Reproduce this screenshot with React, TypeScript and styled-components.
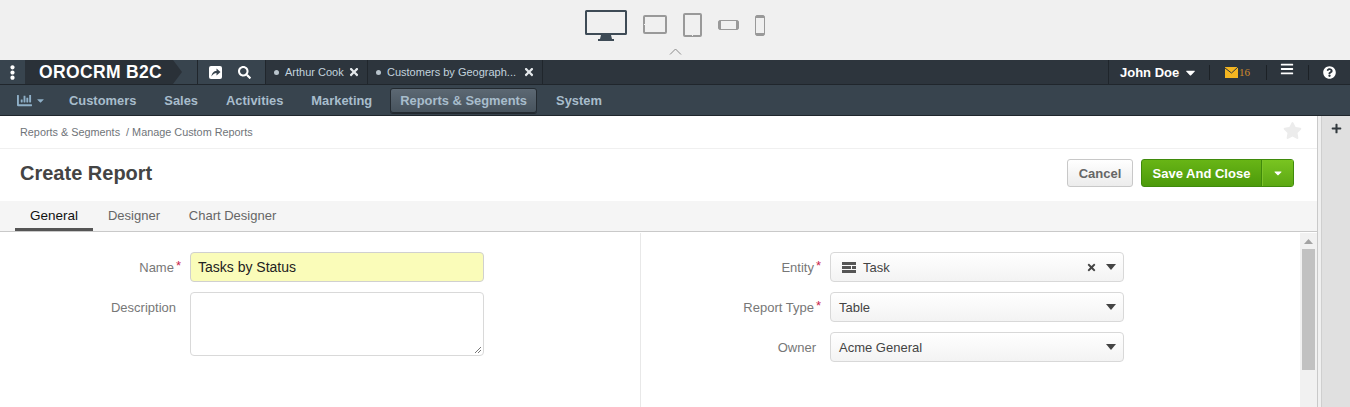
import React from 'react'
import styled, { createGlobalStyle } from 'styled-components'
import { FaBars, FaCaretDown, FaChartBar, FaPlus, FaQuestionCircle, FaSearch, FaStar, FaTimes, FaEllipsisV } from 'react-icons/fa'

const GlobalStyle = createGlobalStyle`
html, body {
  margin: 0;
  padding: 0;
  height: 407px;
  overflow: hidden;
  background: #fff;
  font-family: "Liberation Sans", Arial, sans-serif;
}
* { box-sizing: border-box; }
`

const Page = styled.div`
width: 1350px;
height: 407px;
display: flex;
flex-direction: column;
overflow: hidden;
`

/* device switcher strip */
const DeviceBar = styled.div`
height: 60px;
flex: none;
background: #f0f0f0;
display: flex;
flex-direction: column;
align-items: center;
`
const DeviceRow = styled.div`
height: 47px;
display: flex;
align-items: flex-start;
gap: 16px;
padding-top: 10px;
`
const DeviceSlot = styled.div<{ $top: number }>`
margin-top: ${(p) => p.$top}px;
display: flex;
`
const Chevron = styled.svg`
display: block;
`

/* top dark bar */
const TopBar = styled.div`
height: 25px;
flex: none;
background: #2d353d;
border-bottom: 1px solid #20262c;
display: flex;
align-items: stretch;
color: #fff;
`
const DotsButton = styled.div`
width: 25px;
background: #38444e;
display: flex;
align-items: center;
justify-content: center;
`
const Logo = styled.div`
width: 148px;
background: #2a3138;
position: relative;
font-size: 17.5px;
font-weight: bold;
line-height: 24px;
padding-left: 14px;
letter-spacing: 0.35px;
&::after {
  content: "";
  position: absolute;
  left: 148px;
  top: 0;
  border-left: 9px solid #2a3138;
  border-top: 12px solid transparent;
  border-bottom: 12px solid transparent;
}
`
const ToolGroup = styled.div`
width: 93px;
padding-left: 24px;
background: #38444e;
display: flex;
align-items: stretch;
border-right: 1px solid #20262c;
`
const ToolInner = styled.div`
flex: 1;
border-left: 1px solid #20262c;
padding-left: 11px;
display: flex;
align-items: center;
gap: 16px;
font-size: 13px;
`
const Pin = styled.div<{ $width: number }>`
width: ${(p) => p.$width}px;
flex: none;
display: flex;
align-items: center;
padding-left: 8px;
border-right: 1px solid #20262c;
font-size: 11px;
color: #c3d3dd;
`
const PinDot = styled.span`
width: 5px;
height: 5px;
border-radius: 50%;
background: #b9c4cc;
margin-right: 6px;
flex: none;
`
const PinClose = styled.span`
margin-left: auto;
margin-right: 7px;
display: flex;
color: #e4e8eb;
font-size: 12px;
`
const TopRight = styled.div`
margin-left: auto;
display: flex;
align-items: stretch;
`
const UserBox = styled.div`
width: 101px;
border-left: 1px solid #1f252b;
display: flex;
align-items: center;
padding-left: 11px;
font-size: 13px;
font-weight: bold;
gap: 4px;
`
const TopCell = styled.div<{ $width: number; $raised?: boolean }>`
width: ${(p) => p.$width}px;
display: flex;
align-items: center;
justify-content: center;
position: relative;
padding-bottom: ${(p) => (p.$raised ? '7px' : '0')};
&::before {
  content: "";
  position: absolute;
  left: 0;
  top: 5px;
  bottom: 4px;
  width: 1px;
  background: #1c2126;
}
`
const MailCount = styled.span`
color: #d08a2c;
font-family: "Liberation Serif", serif;
font-size: 11px;
margin-left: 1px;
`

/* main navigation */
const NavBar = styled.div`
height: 31px;
flex: none;
background: #38444e;
border-bottom: 1px solid #1f262c;
display: flex;
align-items: center;
padding-left: 17px;
`
const NavIcon = styled.div`
display: flex;
align-items: center;
gap: 3px;
width: 42px;
color: #8fb0c8;
`
const NavItem = styled.div<{ $active?: boolean }>`
height: 25px;
padding: 0 10px;
margin-right: 8px;
display: flex;
align-items: center;
font-size: 12.9px;
font-weight: bold;
color: #a8bdcc;
border-radius: 3px;
${(p) =>
  p.$active &&
  `
  padding: 0 9px;
  margin-right: 9px;
  background: linear-gradient(#5c6873, #47535d);
  border: 1px solid #232a30;
  box-shadow: 0 1px 0 #232a30;
`}
`

const Body = styled.div`
flex: 1;
min-height: 0;
display: flex;
background: #f0f0f0;
`
const Main = styled.div`
width: 1318px;
flex: none;
display: flex;
flex-direction: column;
border-right: 1px solid #c9c9c9;
background: #fff;
`
const Side = styled.div`
flex: 1;
margin-left: 3px;
border-left: 1px solid #cfcfcf;
background: #e0e0e0;
display: flex;
flex-direction: column;
align-items: center;
padding-top: 7px;
color: #333a3f;
font-size: 11px;
`
const Crumbs = styled.div`
height: 33px;
flex: none;
border-bottom: 1px solid #f0f0f0;
display: flex;
align-items: center;
padding: 0 15px 0 20px;
font-size: 10.85px;
color: #6f7479;
`
const Star = styled.div`
margin-left: auto;
margin-bottom: 3px;
color: #ececec;
font-size: 19px;
display: flex;
`
const TitleRow = styled.div`
height: 52px;
flex: none;
display: flex;
align-items: center;
padding: 0 23px 4px 20px;
`
const Title = styled.h1`
margin: 0;
font-size: 20px;
font-weight: bold;
color: #444;
`
const Actions = styled.div`
margin-left: auto;
display: flex;
align-items: center;
gap: 8px;
`
const CancelButton = styled.div`
width: 66px;
height: 28px;
border: 1px solid #c8c8c8;
border-radius: 3px;
background: linear-gradient(#fff, #ececec);
display: flex;
align-items: center;
justify-content: center;
font-size: 13px;
font-weight: bold;
color: #666;
`
const SaveGroup = styled.div`
height: 28px;
display: flex;
border: 1px solid #3f8a0b;
border-radius: 3px;
background: linear-gradient(#68b516, #4c9a0a);
color: #fff;
font-size: 13px;
font-weight: bold;
`
const SaveLabel = styled.div`
width: 120px;
display: flex;
align-items: center;
justify-content: center;
border-right: 1px solid #3f8a0b;
`
const SaveCaret = styled.div`
width: 31px;
display: flex;
align-items: center;
justify-content: center;
background: linear-gradient(#79c421, #5ca813);
border-left: 1px solid #7cc22a;
font-size: 12px;
`
const TabBar = styled.div`
height: 31px;
flex: none;
margin-bottom: 1px;
background: #f5f5f5;
border-bottom: 1px solid #c9c9c9;
display: flex;
padding-left: 15px;
`
const Tab = styled.div<{ $active?: boolean; $width: number }>`
width: ${(p) => p.$width}px;
height: 30px;
display: flex;
align-items: center;
justify-content: center;
font-size: ${(p) => (p.$active ? '13.5px' : '13px')};
color: ${(p) => (p.$active ? '#111' : '#666')};
border-bottom: ${(p) => (p.$active ? '3px solid #555' : '0')};
padding: ${(p) => (p.$active ? '1px 0 0' : '0 0 2px')};
`
const FormArea = styled.div`
flex: 1;
min-height: 0;
display: flex;
`
const FormColumns = styled.div`
flex: 1;
display: grid;
grid-template-columns: 640px 1fr;
`
const FormColumn = styled.div<{ $divider?: boolean }>`
padding-top: 19px;
display: grid;
grid-template-columns: 181px 294px;
grid-auto-rows: min-content;
column-gap: 9px;
row-gap: 10px;
${(p) => p.$divider && 'box-shadow: inset 1px 0 0 #e8e8e8;'}
`
const Label = styled.label<{ $required?: boolean; $top?: boolean }>`
height: 30px;
display: flex;
align-items: ${(p) => (p.$top ? 'flex-start' : 'center')};
justify-content: flex-end;
font-size: 13px;
color: #777;
padding-right: ${(p) => (p.$required ? '0' : '5px')};
padding-top: ${(p) => (p.$top ? '8px' : '0')};
`
const Required = styled.span`
color: #c9254e;
margin-left: 2px;
margin-top: -3px;
font-size: 13px;
`
const NameInput = styled.div`
height: 30px;
border: 1px solid #d0d0d0;
border-radius: 4px;
background: #fafcb9;
display: flex;
align-items: center;
padding-left: 7px;
font-size: 14px;
color: #222;
`
const DescriptionBox = styled.div`
height: 64px;
border: 1px solid #d9d9d9;
border-radius: 4px;
background: #fff;
position: relative;
`
const Grip = styled.svg`
position: absolute;
right: 1px;
bottom: 1px;
`
const Select = styled.div`
height: 30px;
border: 1px solid #d8d8d8;
border-radius: 4px;
background: linear-gradient(#fff, #f3f3f3);
display: flex;
align-items: center;
padding: 0 7px 0 8px;
font-size: 13px;
color: #444;
`
const SelectIcons = styled.div`
margin-left: auto;
display: flex;
align-items: center;
gap: 9px;
color: #444;
`
const SelectCaret = styled.span`
width: 0;
height: 0;
border-left: 5.5px solid transparent;
border-right: 5.5px solid transparent;
border-top: 6px solid #444;
`
const EntityIcon = styled.svg`
margin: 0 7px 0 3px;
`
const Scrollbar = styled.div`
width: 17px;
flex: none;
background: #f1f1f1;
display: flex;
flex-direction: column;
align-items: center;
padding-top: 6px;
`
const ScrollThumb = styled.div`
width: 13px;
height: 121px;
margin-top: 5px;
background: #c1c1c1;
`

const Monitor = () => (
  <svg width="42" height="31" viewBox="0 0 42 31">
    <rect x="1" y="1" width="40" height="23" fill="none" stroke="#3e4b56" strokeWidth="2" rx="0.5" />
    <path d="M16 25h10l1 4h2v2H13v-2h2z" fill="#3e4b56" />
  </svg>
)

const TabletWide = () => (
  <svg width="24" height="19" viewBox="0 0 24 19">
    <rect x="1" y="1" width="22" height="17" rx="1" fill="none" stroke="#999" strokeWidth="2" />
    <rect x="1" y="9" width="1" height="1" fill="#f0f0f0" />
  </svg>
)

const TabletTall = () => (
  <svg width="19" height="24" viewBox="0 0 19 24">
    <rect x="1" y="1" width="17" height="22" rx="1" fill="none" stroke="#999" strokeWidth="2" />
    <rect x="9" y="22" width="1" height="1" fill="#f0f0f0" />
  </svg>
)

const PhoneWide = () => (
  <svg width="21" height="10" viewBox="0 0 21 10">
    <rect x="0.5" y="0.5" width="20" height="9" rx="1.5" fill="none" stroke="#999" />
    <path d="M1 1h2v8H1zM18 1h2v8h-2z" fill="#999" />
  </svg>
)

const PhoneTall = () => (
  <svg width="10" height="21" viewBox="0 0 10 21">
    <rect x="0.5" y="0.5" width="9" height="20" rx="1.5" fill="none" stroke="#999" />
    <path d="M1 1h8v2H1zM1 18h8v2H1z" fill="#999" />
  </svg>
)

const ShareIcon = () => (
  <svg width="13" height="13" viewBox="0 0 13 13">
    <rect width="13" height="13" rx="2" fill="#fff" />
    <path d="M2.5 10.5C2.7 7 5 5 7.5 5V2.5L11.5 6 7.5 9.5V7C5.5 7 3.7 8.3 2.5 10.5z" fill="#38444e" />
  </svg>
)

const devices = [
  { top: 5, icon: <TabletWide /> },
  { top: 3, icon: <TabletTall /> },
  { top: 10, icon: <PhoneWide /> },
  { top: 5, icon: <PhoneTall /> },
]

const pins = [
  { title: 'Arthur Cook', width: 102 },
  { title: 'Customers by Geograph...', width: 175 },
]

const navItems = ['Customers', 'Sales', 'Activities', 'Marketing', 'Reports & Segments', 'System']

export default function App() {
  return (
    <Page>
      <GlobalStyle />
      <DeviceBar>
        <DeviceRow>
          <Monitor />
          {devices.map((d, i) => (
            <DeviceSlot key={i} $top={d.top}>{d.icon}</DeviceSlot>
          ))}
        </DeviceRow>
        <Chevron width="13" height="8" viewBox="0 0 13 8">
          <path d="M1 7.5 6.5 2 12 7.5" fill="none" stroke="#8a8a8a" strokeWidth="1" />
        </Chevron>
      </DeviceBar>

      <TopBar>
        <DotsButton><FaEllipsisV size={15} /></DotsButton>
        <Logo>OROCRM B2C</Logo>
        <ToolGroup>
          <ToolInner>
            <ShareIcon />
            <FaSearch />
          </ToolInner>
        </ToolGroup>
        {pins.map((pin) => (
          <Pin key={pin.title} $width={pin.width}>
            <PinDot />
            {pin.title}
            <PinClose><FaTimes /></PinClose>
          </Pin>
        ))}
        <TopRight>
          <UserBox>John Doe <FaCaretDown size={15} /></UserBox>
          <TopCell $width={57}>
            <svg width="13" height="11" viewBox="0 0 13 11">
              <rect width="13" height="11" fill="#f3b521" />
              <path d="M0 1l6.5 5L13 0" fill="none" stroke="#2d353d" strokeWidth="1" />
            </svg>
            <MailCount>16</MailCount>
          </TopCell>
          <TopCell $width={42} $raised><FaBars size={14} /></TopCell>
          <TopCell $width={42}><FaQuestionCircle size={13} /></TopCell>
        </TopRight>
      </TopBar>

      <NavBar>
        <NavIcon><FaChartBar size={15} /><FaCaretDown size={11} /></NavIcon>
        {navItems.map((item) => (
          <NavItem key={item} $active={item === 'Reports & Segments'}>{item}</NavItem>
        ))}
      </NavBar>

      <Body>
        <Main>
          <Crumbs>
            Reports &amp; Segments&nbsp;&nbsp;/&nbsp;Manage Custom Reports
            <Star><FaStar /></Star>
          </Crumbs>
          <TitleRow>
            <Title>Create Report</Title>
            <Actions>
              <CancelButton>Cancel</CancelButton>
              <SaveGroup>
                <SaveLabel>Save And Close</SaveLabel>
                <SaveCaret><FaCaretDown /></SaveCaret>
              </SaveGroup>
            </Actions>
          </TitleRow>
          <TabBar>
            <Tab $active $width={78}>General</Tab>
            <Tab $width={82}>Designer</Tab>
            <Tab $width={115}>Chart Designer</Tab>
          </TabBar>
          <FormArea>
            <FormColumns>
              <FormColumn>
                <Label $required>Name<Required>*</Required></Label>
                <NameInput>Tasks by Status</NameInput>
                <Label $top>Description</Label>
                <DescriptionBox>
                  <Grip width="9" height="9" viewBox="0 0 9 9">
                    <path d="M8 2 2 8M8 5 5 8" stroke="#777" strokeWidth="1" />
                  </Grip>
                </DescriptionBox>
              </FormColumn>
              <FormColumn $divider>
                <Label $required>Entity<Required>*</Required></Label>
                <Select>
                  <EntityIcon width="14" height="11" viewBox="0 0 14 11">
                    <path d="M0 0h14v3H0zM0 4h9v3H0zM10 4h4v3h-4zM0 8h14v3H0z" fill="#555" />
                  </EntityIcon>
                  Task
                  <SelectIcons>
                    <FaTimes size={11} />
                    <SelectCaret />
                  </SelectIcons>
                </Select>
                <Label $required>Report Type<Required>*</Required></Label>
                <Select>Table<SelectIcons><SelectCaret /></SelectIcons></Select>
                <Label>Owner</Label>
                <Select>Acme General<SelectIcons><SelectCaret /></SelectIcons></Select>
              </FormColumn>
            </FormColumns>
            <Scrollbar>
              <svg width="9" height="5" viewBox="0 0 9 5"><path d="M4.5 0 9 5H0z" fill="#a3a3a3" /></svg>
              <ScrollThumb />
            </Scrollbar>
          </FormArea>
        </Main>
        <Side><FaPlus /></Side>
      </Body>
    </Page>
  )
}
